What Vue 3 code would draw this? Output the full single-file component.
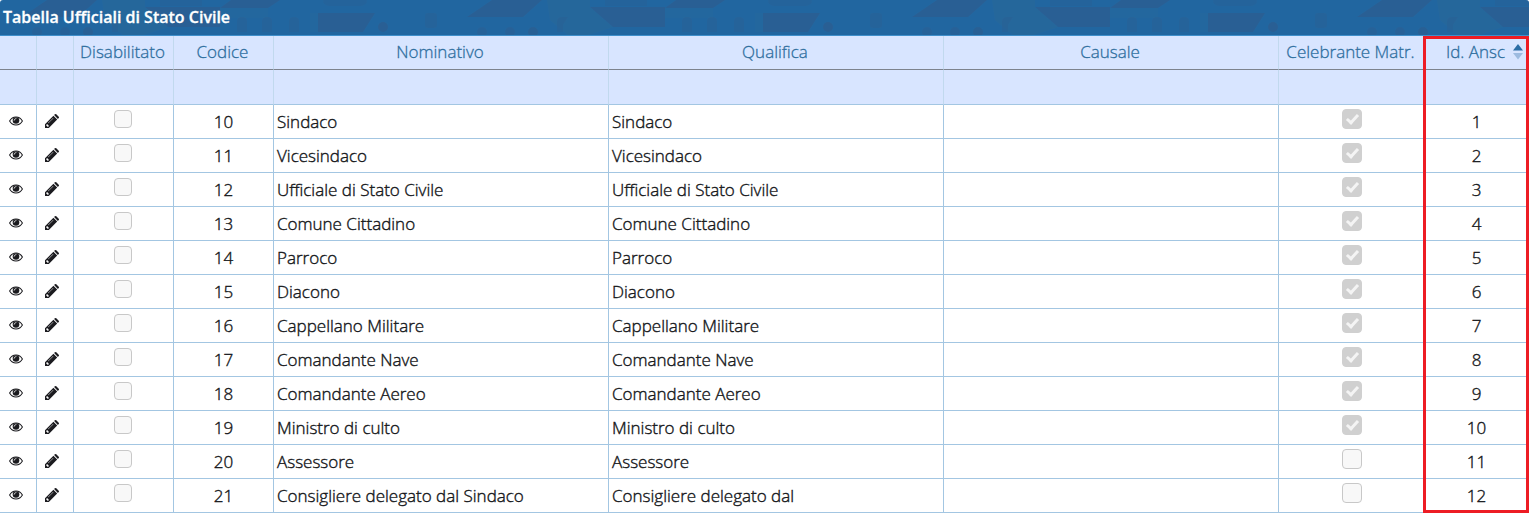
<script setup>
const names = [
  ['Sindaco', 'Sindaco'],
  ['Vicesindaco', 'Vicesindaco'],
  ['Ufficiale di Stato Civile', 'Ufficiale di Stato Civile'],
  ['Comune Cittadino', 'Comune Cittadino'],
  ['Parroco', 'Parroco'],
  ['Diacono', 'Diacono'],
  ['Cappellano Militare', 'Cappellano Militare'],
  ['Comandante Nave', 'Comandante Nave'],
  ['Comandante Aereo', 'Comandante Aereo'],
  ['Ministro di culto', 'Ministro di culto'],
  ['Assessore', 'Assessore'],
  ['Consigliere delegato dal Sindaco', 'Consigliere delegato dal']
]
const rows = names.map(([nominativo, qualifica], i) => ({
  id: i + 1,
  codice: i + 10,
  nominativo,
  qualifica,
  celebrante: i < 10
}))
</script>

<template>
  <main class="panel">
    <header class="title">
      <svg class="pattern" aria-hidden="true">
        <defs>
          <pattern id="skyline" x="220" width="445" height="35" patternUnits="userSpaceOnUse">
            <path d="M327 0h43v7l23 20-25 8h-20l-18-15z" fill="#25679b" />
            <path d="M0 8h48v10H0zM90 13h8v19h-8z" fill="#25679b" opacity=".5" />
            <g fill="#295f94">
              <path d="M0 8 11 0H60L48 8z" />
              <path d="M98 13h57l-12 19H98z" />
              <path d="M272 0h50l-19 17h-56z" />
              <path d="M370 7h75v20h-52z" />
              <path d="M103 0h44q0 6-8 6h-28q-8 0-8-6zM385 0h42v6h-42z" opacity=".4" />
              <path d="M17 32V21q0-4 5-4t5 4v11zM42 32V21q0-4 5-4t5 4v11zM69 32V21q0-4 5-4t5 4v11zM337 32V21q0-4 5-4h6l-5 8v7z" opacity=".5" />
              <rect x="205" y="13" width="12" height="15" rx="3" opacity=".5" />
              <circle cx="163" cy="27" r="5" />
              <circle cx="262" cy="32" r="5" opacity=".6" />
              <circle cx="290" cy="32" r="5" opacity=".7" />
              <circle cx="313" cy="32" r="5" opacity=".9" />
            </g>
          </pattern>
        </defs>
        <rect width="100%" height="35" fill="url(#skyline)" />
      </svg>
      <h1>Tabella Ufficiali di Stato Civile</h1>
    </header>

    <div class="grid">
      <table>
        <colgroup>
          <col class="c-view" /><col class="c-edit" /><col class="c-flag" /><col class="c-code" />
          <col /><col /><col /><col class="c-celeb" /><col class="c-id" />
        </colgroup>
        <thead>
          <tr>
            <td></td>
            <td></td>
            <th scope="col">Disabilitato</th>
            <th scope="col">Codice</th>
            <th scope="col">Nominativo</th>
            <th scope="col">Qualifica</th>
            <th scope="col">Causale</th>
            <th scope="col">Celebrante Matr.</th>
            <th scope="col" aria-sort="ascending">
              <button class="sort" type="button">
                Id. Ansc
                <svg width="10" height="16" viewBox="0 0 10 16" aria-hidden="true">
                  <path d="M0 6.500 5 0l5 6.500z" fill="#2a6da5" />
                  <path d="M0 9h10l-5 6.500z" fill="#9dbbe0" />
                </svg>
              </button>
            </th>
          </tr>
          <tr class="filters">
            <td v-for="n in 9" :key="n"></td>
          </tr>
        </thead>
        <tbody>
          <tr v-for="r in rows" :key="r.id">
            <td class="icon">
              <button type="button" :aria-label="`Visualizza ${r.nominativo}`">
                <svg width="14" height="14" viewBox="0 0 14 14">
                  <path fill="none" stroke="#1b1b1f" stroke-width="1.100" d="M.6 7C2 4.500 4.300 3 7 3S12 4.500 13.400 7C12 9.500 9.700 11 7 11S2 9.500 .6 7z" />
                  <circle cx="7" cy="6.500" r="3.300" fill="#1b1b1f" />
                  <path fill="none" stroke="#fff" stroke-width=".7" stroke-linecap="round" d="M5.100 6.300A2 2 0 0 1 7 4.500" />
                </svg>
              </button>
            </td>
            <td class="icon edit">
              <button type="button" :aria-label="`Modifica ${r.nominativo}`">
                <svg width="14" height="14" viewBox="0 0 14 14">
                  <path fill-rule="evenodd" fill="#1b1b1f" d="M0 14V10.200L8.400 1.800 12.200 5.600 3.800 14zM1.200 10.900V11.800H2.200V12.800H3.100L4 11.900 2.100 10zM8.100 3.900 3 9 3.300 9.300 8.400 4.200z" />
                  <path fill="#1b1b1f" d="M9.100 1.100 9.900.300Q10.600-.200 11.300.300L13.700 2.700Q14.300 3.400 13.700 4.100L12.900 4.900z" />
                </svg>
              </button>
            </td>
            <td class="flag"><input type="checkbox" disabled :aria-label="`Disabilitato ${r.nominativo}`" /></td>
            <td class="num">{{ r.codice }}</td>
            <td>{{ r.nominativo }}</td>
            <td>{{ r.qualifica }}</td>
            <td></td>
            <td class="flag large">
              <input type="checkbox" disabled :checked="r.celebrante" :aria-label="`Celebrante Matr. ${r.nominativo}`" />
            </td>
            <td class="num">{{ r.id }}</td>
          </tr>
        </tbody>
      </table>
      <div class="highlight"></div>
    </div>
  </main>
</template>

<style>
body { background: #fff; }
</style>

<style scoped>
.panel {
  margin-right: 5px;
  font: 300 17px/22px "Open Sans", "Noto Sans", sans-serif;
  color: #16181b;
  -webkit-text-stroke: 0.4px currentColor;
}
.title {
  position: relative;
  height: 35px;
  border-bottom: 1px solid #3f8fcb;
  border-radius: 3px 3px 0 0;
  background: #2166a0;
  overflow: hidden;
}
.pattern { position: absolute; inset: 0; width: 100%; height: 35px; }
h1 {
  position: relative;
  margin: 0;
  padding-left: 3px;
  font-size: 16px;
  font-weight: 600;
  line-height: 35px;
  color: #fff;
  -webkit-text-stroke: 0.3px #fff;
}
.grid { position: relative; }
table {
  width: 100%;
  table-layout: fixed;
  border-collapse: separate;
  border-spacing: 0;
}
.c-view, .c-edit { width: 37px; }
.c-flag, .c-code { width: 100px; }
.c-celeb { width: 146px; }
.c-id { width: 104px; }
th, td {
  box-sizing: border-box;
  height: 34px;
  padding: 0 3px;
  border-right: 1px solid #a3c6e2;
  border-bottom: 1px solid #a3c6e2;
  text-align: left;
  white-space: nowrap;
}
thead th, thead td {
  padding: 0 2px 2px 0;
  background: #d8e5ff;
  border-right-color: #c1d9ee;
  border-bottom-color: #7d838d;
  color: #2e6e9e;
  font-weight: 300;
  text-align: center;
  -webkit-text-stroke: 0.3px #2e6e9e;
}
thead .filters td { height: 35px; border-bottom-color: #a3c6e2; }
td.num { text-align: center; }
button { padding: 0; border: 0; background: none; font: inherit; color: inherit; }
.sort { display: flex; align-items: center; gap: 8px; margin-left: auto; padding-right: 3px; }
td.icon { padding: 0 9px 2px; }
td.edit { padding-left: 8px; }
.icon button, .icon svg { display: block; }
.flag { text-align: center; padding: 0 4px 5px 2px; }
.large { padding: 0 3px 5px; }
input {
  appearance: none;
  display: block;
  box-sizing: border-box;
  width: 18px;
  height: 18px;
  margin: 0 auto;
  border: 1px solid #c8c8c8;
  border-radius: 4px;
  background: #f8f8f8;
}
.large input { width: 20px; height: 20px; }
input:checked { position: relative; border-color: #d0d0d0; background: #d0d0d0; }
input:checked::after {
  content: "";
  position: absolute;
  left: 6px;
  top: 2px;
  width: 4px;
  height: 9px;
  border: solid #f4f4f4;
  border-width: 0 3px 3px 0;
  transform: rotate(42deg);
}
.highlight {
  position: absolute;
  top: 0;
  right: 0;
  bottom: 0;
  box-sizing: border-box;
  width: 106px;
  border: 3px solid #ed1c24;
  pointer-events: none;
}
</style>
